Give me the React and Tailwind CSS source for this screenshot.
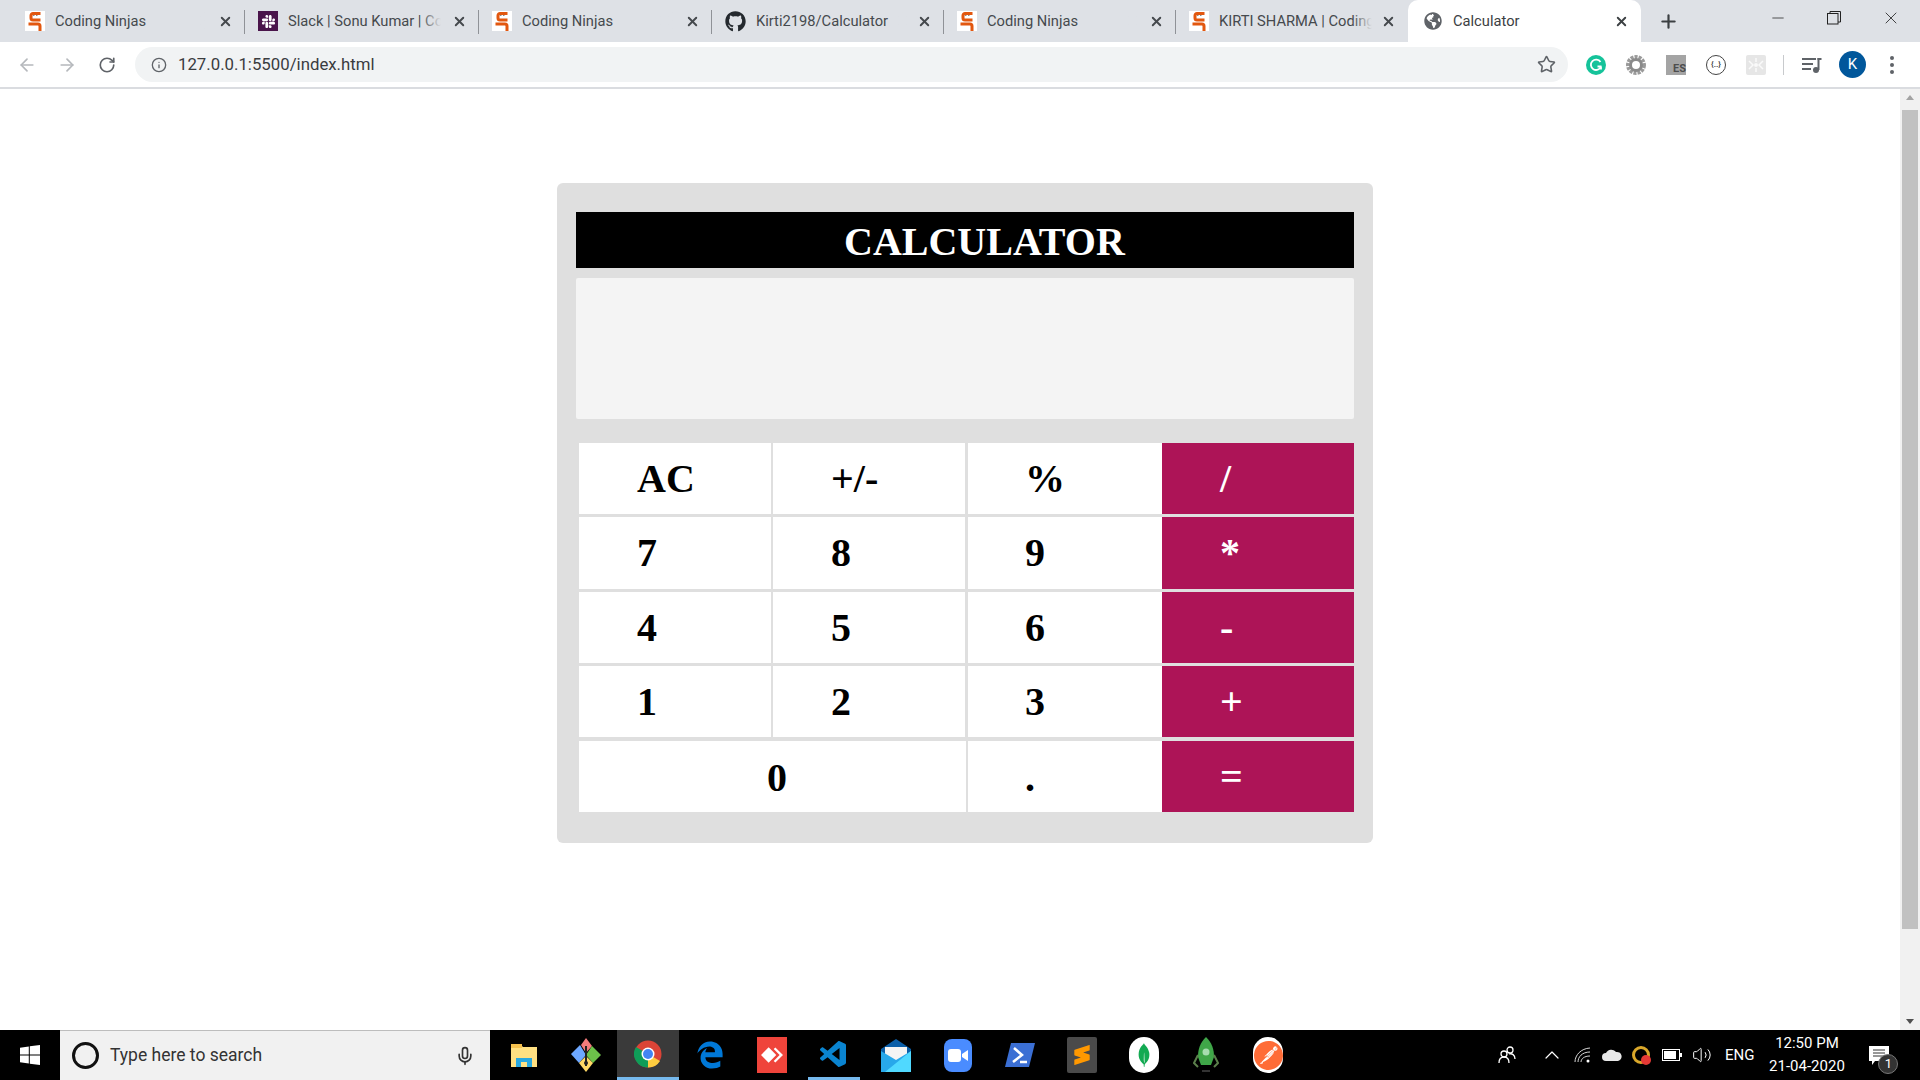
import React from "react";
import { FaGithub, FaSlack, FaGlobeAmericas, FaEdgeLegacy } from "react-icons/fa";
import { SiPostman, SiSublimetext, SiMongodb, SiAnydesk } from "react-icons/si";
import { VscVscode } from "react-icons/vsc";
import {
  ArrowLeft,
  ArrowRight,
  RotateCw,
  Info,
  Star,
  X,
  Plus,
  Minus,
  Mic,
  ChevronUp,
  Volume2,
} from "lucide-react";

const NinjaIcon = () => (
  <svg width="20" height="20" viewBox="0 0 20 20" className="shrink-0">
    <rect width="20" height="20" fill="#fff" />
    <path d="M15.500 2.500H8a2 2 0 0 0-2 2V7a2 2 0 0 0 2 2h7.500" fill="none" stroke="#e2570f" strokeWidth="3" />
    <path d="M8 4.500h1.500M11 4.500h1.500" stroke="#8a8a8a" strokeWidth="1" />
    <path d="M5 14.500V13h8a2 2 0 0 1 2 2v5" fill="none" stroke="#e2570f" strokeWidth="3" />
  </svg>
);

const tabs = [
  { title: "Coding Ninjas", icon: <NinjaIcon />, width: "w-[233px]" },
  {
    title: "Slack | Sonu Kumar | Coding Ninjas",
    width: "w-[234px]",
    icon: (
      <span className="w-5 h-5 shrink-0 bg-[#4a154b] flex items-center justify-center text-white">
        <FaSlack size={15} />
      </span>
    ),
  },
  { title: "Coding Ninjas", icon: <NinjaIcon />, width: "w-[233px]" },
  {
    title: "Kirti2198/Calculator",
    width: "w-[232px]",
    icon: <FaGithub size={21} className="shrink-0 text-[#24292e]" />,
  },
  { title: "Coding Ninjas", icon: <NinjaIcon />, width: "w-[232px]" },
  { title: "KIRTI SHARMA | Coding Ninjas", icon: <NinjaIcon />, width: "w-[232px]" },
];

const Tab = ({ title, icon, width, last }) => (
  <div className={`${width} h-[42px] flex items-center pl-[13px] pr-[12px] relative`}>
    {icon}
    <div className="ml-[10px] w-[153px] overflow-hidden whitespace-nowrap text-[14.700px] text-[#45494d] relative">
      {title}
      <div className="absolute right-0 top-0 bottom-0 w-5 bg-gradient-to-r from-transparent to-[#dee1e6]" />
    </div>
    <X size={15} strokeWidth={3} className="ml-auto text-[#45494d]" />
    {!last && <div className="absolute right-0 top-[10px] w-[1px] h-[24px] bg-[#8f9297]" />}
  </div>
);

const TabBar = () => (
  <div className="h-[42px] bg-[#dee1e6] flex pl-[12px] shrink-0">
    {tabs.map((t, i) => (
      <Tab key={i} title={t.title} icon={t.icon} width={t.width} last={i === tabs.length - 1} />
    ))}
    <div className="w-[233px] h-[42px] bg-white rounded-t-[10px] flex items-center pl-[16px] pr-[12px]">
      <FaGlobeAmericas size={18} className="text-[#5f6368]" />
      <span className="ml-[11px] text-[14.700px] text-[#3c4043]">Calculator</span>
      <X size={15} strokeWidth={3} className="ml-auto text-[#3c4043]" />
    </div>
    <div className="ml-[17px] flex items-center">
      <Plus size={21} strokeWidth={2.5} className="text-[#3c4043]" />
    </div>
    <div className="ml-auto flex items-start text-[#222]">
      <div className="w-[55px] h-[36px] flex items-center justify-center">
        <Minus size={18} strokeWidth={1} />
      </div>
      <div className="w-[57px] h-[36px] flex items-center justify-center">
        <svg width="14" height="14" viewBox="0 0 14 14" fill="none" stroke="currentColor">
          <rect x="0.500" y="2.500" width="10.500" height="10.500" />
          <path d="M3 2.500V0.500h10.500V11H11" />
        </svg>
      </div>
      <div className="w-[58px] h-[36px] flex items-center justify-center">
        <X size={20} strokeWidth={1} />
      </div>
    </div>
  </div>
);

const Toolbar = () => (
  <div className="h-[47px] bg-white border-b-[2px] border-[#dadce0] flex items-start pt-[5px] shrink-0">
    <div className="flex items-center h-[35px] pl-[17px] gap-[20px]">
      <ArrowLeft size={20} className="text-[#b5b8bc]" />
      <ArrowRight size={20} className="text-[#b5b8bc]" />
      <RotateCw size={18} strokeWidth={2.2} className="ml-[1px] text-[#5f6368]" />
    </div>
    <div className="ml-[19px] w-[1433px] h-[35px] bg-[#f1f3f4] rounded-full flex items-center pl-[16px] pr-[12px]">
      <Info size={16} className="text-[#5f6368]" />
      <span className="ml-[11px] text-[16.800px] text-[#3a3c3f]">127.0.0.1:5500/index.html</span>
      <Star size={19} className="ml-auto text-[#5f6368]" />
    </div>
    <div className="flex items-center h-[35px] ml-[18px]">
      <svg width="20" height="20" viewBox="0 0 20 20">
        <circle cx="10" cy="10" r="10" fill="#15c39a" />
        <path d="M14.500 7A5.200 5.200 0 1 0 15 11.500M15.500 11.500h-4M15 11.500v3" fill="none" stroke="#fff" strokeWidth="1.800" />
      </svg>
      <svg width="20" height="20" viewBox="0 0 20 20" className="ml-[20px]">
        <circle cx="10" cy="10" r="8" fill="none" stroke="#9a9a9a" strokeWidth="4" strokeDasharray="3 1" />
        <circle cx="10" cy="10" r="5.500" fill="none" stroke="#8a8a8a" strokeWidth="3" />
      </svg>
      <span className="ml-[20px] w-5 h-5 bg-[#a4a4a4] flex items-end justify-end text-[11px] font-bold leading-none text-[#4d4d4d] pb-[1px]">
        ES
      </span>
      <span className="ml-[20px] w-5 h-5 rounded-full border-[1.500px] border-[#444] flex items-center justify-center text-[8px] font-bold leading-none text-[#444]">
        {"{..}"}
      </span>
      <svg width="20" height="20" viewBox="0 0 20 20" className="ml-[20px]">
        <rect width="20" height="20" rx="2" fill="#e6e6e6" />
        <path d="M3 6l4 4-4 4M17 6l-4 4 4 4M10 3v4M10 13v4" fill="none" stroke="#fafafa" strokeWidth="1.500" />
        <circle cx="10" cy="10" r="2" fill="#fafafa" />
      </svg>
      <div className="ml-[17px] w-[1px] h-[20px] bg-[#c8cacd]" />
      <svg width="20" height="18" viewBox="0 0 20 18" className="ml-[18px]" fill="#5f6368">
        <rect x="0" y="2" width="14" height="2" />
        <rect x="0" y="7" width="11" height="2" />
        <rect x="0" y="12" width="9" height="2" />
        <circle cx="14" cy="14" r="3" />
        <rect x="15.500" y="2" width="2" height="12" />
        <rect x="15.500" y="2" width="4" height="2" />
      </svg>
      <span className="ml-[17px] w-[27px] h-[27px] rounded-full bg-[#01579b] flex items-center justify-center text-white text-[15px]">
        K
      </span>
      <svg width="6" height="20" viewBox="0 0 6 20" fill="#5f6368" className="ml-[23px]">
        <circle cx="3" cy="3" r="2" />
        <circle cx="3" cy="10" r="2" />
        <circle cx="3" cy="17" r="2" />
      </svg>
    </div>
  </div>
);

const rows = [
  ["AC", "+/-", "%", "/"],
  ["7", "8", "9", "*"],
  ["4", "5", "6", "-"],
  ["1", "2", "3", "+"],
];

const Calculator = () => (
  <div className="ml-[557px] mt-[94px] w-[816px] h-[660px] bg-[#dfdfdf] rounded-[6px] pt-[29px] pl-[19px] pr-[19px] font-['Liberation_Serif',serif]">
    <div className="h-[56px] bg-black text-white font-bold text-[40px] leading-[60px] pl-[268px]">CALCULATOR</div>
    <div className="mt-[10px] h-[141px] bg-[#f4f4f4] rounded-[2px]" />
    <div className="mt-[24px] ml-[3px] grid grid-cols-[194px_195px_194px_192px] grid-rows-[71px_72px_71px_71px_72px] gap-y-[3px] text-[40px] font-bold">
      {rows.map((row, r) =>
        row.map((label, c) =>
          c === 3 ? (
            <div key={label} className="bg-[#ad1457] text-white pl-[58px] flex items-center">
              {label}
            </div>
          ) : (
            <div
              key={label}
              className={
                c === 0
                  ? "bg-white border-r-[2px] border-[#dfdfdf] pl-[58px] flex items-center"
                  : c === 1
                    ? "bg-white border-r-[3px] border-[#dfdfdf] pl-[58px] flex items-center"
                    : "bg-white pl-[57px] flex items-center"
              }
            >
              {label}
            </div>
          )
        )
      )}
      <div className="col-span-2 mt-[1px] bg-white border-r-[2px] border-[#dfdfdf] pl-[188px] pt-[2px] flex items-center">0</div>
      <div className="bg-white mt-[1px] pl-[57px] pt-[2px] flex items-center">.</div>
      <div className="bg-[#ad1457] mt-[1px] text-white pl-[58px] flex items-center">=</div>
    </div>
  </div>
);

const Scrollbar = () => (
  <div className="w-[20px] bg-[#f1f1f1] flex flex-col items-center shrink-0">
    <div className="h-[17px] flex items-center justify-center">
      <div className="w-0 h-0 border-x-[4px] border-x-transparent border-b-[5px] border-b-[#a3a3a3]" />
    </div>
    <div className="mt-[4px] w-[16px] h-[819px] bg-[#c1c1c1]" />
    <div className="mt-auto h-[17px] flex items-center justify-center">
      <div className="w-0 h-0 border-x-[4px] border-x-transparent border-t-[5px] border-t-[#505050]" />
    </div>
  </div>
);

const AppSlot = ({ children, active, underline }) => (
  <div
    className={
      active
        ? "w-[62px] h-[50px] flex items-center justify-center bg-[#3a3a3a] border-b-[3px] border-[#76b9ed]"
        : "w-[62px] h-[50px] flex items-center justify-center relative"
    }
  >
    {children}
    {underline && <div className="absolute bottom-0 left-[5px] w-[52px] h-[3px] bg-[#76b9ed]" />}
  </div>
);

const Taskbar = () => (
  <div className="h-[50px] bg-black flex items-center shrink-0">
    <div className="w-[60px] flex justify-center">
      <svg width="20" height="20" viewBox="0 0 20 20" fill="#fff">
        <path d="M0 2.800l8.800-1.300v8H0zM9.800 1.300L20 0v9.500H9.800zM0 10.500h8.800v8L0 17.200zM9.800 10.500H20V20L9.800 18.700z" />
      </svg>
    </div>
    <div className="w-[430px] h-[50px] bg-[#f1f1f1] border-t-[1px] border-[#bdbdbd] flex items-center pl-[12px] pr-[15px]">
      <div className="w-[27px] h-[27px] rounded-full border-[3px] border-[#111]" />
      <span className="ml-[11px] text-[17.500px] text-[#333]">Type here to search</span>
      <Mic size={20} className="ml-auto text-[#333]" />
    </div>
    <div className="ml-[3px] flex">
      <AppSlot>
        <svg width="28" height="28" viewBox="0 0 28 28">
          <path d="M1 4h10l2 2h14v20H1z" fill="#ffe082" />
          <rect x="1" y="8" width="26" height="18" fill="#ffe082" />
          <rect x="1" y="3" width="11" height="4" fill="#f5c14e" />
          <path d="M6 26v-9h16v9h-5v-5h-6v5z" fill="#29a8e0" />
        </svg>
      </AppSlot>
      <AppSlot>
        <svg width="32" height="36" viewBox="0 0 32 36">
          <path d="M1 17l9-9 6 10-7 8z" fill="#6ea8ff" />
          <path d="M16 1l6 8-6 7-5-8z" fill="#f47b7b" />
          <path d="M22 9l9 9-8 8-7-8z" fill="#6cc24a" />
          <path d="M9 26l7-7 7 7-7 9z" fill="#ffd966" />
          <path d="M16 9v20" stroke="#222" strokeWidth="2" />
          <circle cx="16" cy="26" r="2" fill="#222" />
        </svg>
      </AppSlot>
      <AppSlot active>
        <svg width="28" height="28" viewBox="0 0 28 28">
          <circle cx="14" cy="14" r="13.500" fill="#db4437" />
          <path d="M14 14L26 21A13.500 13.500 0 0 1 14 27.500z" fill="#ffcd40" />
          <path d="M14 14L14 27.500A13.500 13.500 0 0 1 2 7z" fill="#0f9d58" />
          <circle cx="14" cy="14" r="6.500" fill="#fff" />
          <circle cx="14" cy="14" r="5" fill="#4285f4" />
        </svg>
      </AppSlot>
      <AppSlot>
        <FaEdgeLegacy size={28} className="text-[#0078d7]" />
      </AppSlot>
      <AppSlot>
        <span className="w-[30px] h-[36px] bg-[#ef443b] flex items-center justify-center text-white">
          <SiAnydesk size={22} />
        </span>
      </AppSlot>
      <AppSlot underline>
        <VscVscode size={32} className="text-[#0a84d0]" />
      </AppSlot>
      <AppSlot>
        <svg width="30" height="34" viewBox="0 0 30 34">
          <path d="M0 11L15 1l15 10v23H0z" fill="#0a5ea8" />
          <path d="M4 9h22v8l-11 6-11-6z" fill="#f4f4f4" />
          <path d="M0 13l15 9 15-9v21H0z" fill="#28a8ea" />
          <path d="M30 13v21H4z" fill="#50d9ff" />
        </svg>
      </AppSlot>
      <AppSlot>
        <span className="w-[28px] h-[33px] rounded-[8px] bg-[#4a8cff] flex items-center justify-center">
          <svg width="20" height="13" viewBox="0 0 20 13" fill="#fff">
            <rect width="13" height="13" rx="3" />
            <path d="M14 5l6-4v11l-6-4z" />
          </svg>
        </span>
      </AppSlot>
      <AppSlot>
        <svg width="30" height="30" viewBox="0 0 30 30">
          <path d="M6 3h24l-6 24H0z" fill="#3b6fd4" />
          <path d="M9 8l8 7-9 7M15 22h7" fill="none" stroke="#fff" strokeWidth="2.500" />
        </svg>
      </AppSlot>
      <AppSlot>
        <span className="w-[30px] h-[36px] rounded-[2px] bg-[#4a4a4a] flex items-center justify-center text-[#ff9800]">
          <SiSublimetext size={20} />
        </span>
      </AppSlot>
      <AppSlot>
        <span className="w-[30px] h-[36px] rounded-full bg-white flex items-center justify-center text-[#13aa52]">
          <SiMongodb size={24} />
        </span>
      </AppSlot>
      <AppSlot>
        <svg width="26" height="36" viewBox="0 0 26 36">
          <path d="M13 0C19 6 21 12 21 20l-3 8H8l-3-8C5 12 7 6 13 0z" fill="#3fa648" />
          <path d="M5 18L1 26l4 4M21 18l4 8-4 4" fill="none" stroke="#5b7f4b" strokeWidth="2" />
          <circle cx="13" cy="15" r="3.500" fill="#a6dcae" />
          <rect x="9" y="33" width="8" height="2" fill="#333" />
        </svg>
      </AppSlot>
      <AppSlot>
        <span className="w-[30px] h-[36px] rounded-full bg-white flex items-center justify-center text-[#ff6c37]">
          <SiPostman size={29} />
        </span>
      </AppSlot>
    </div>
    <div className="flex items-center ml-[198px] text-white">
      <svg width="20" height="20" viewBox="0 0 20 20" fill="none" stroke="#fff" strokeWidth="1.300">
        <circle cx="13" cy="5" r="3" />
        <circle cx="7" cy="9" r="3" />
        <path d="M2 18c0-4 2-6 5-6s5 2 5 6M12 9c3-1 6 1 6 5" />
      </svg>
      <ChevronUp size={24} strokeWidth={1.2} className="ml-[23px]" />
      <svg width="17" height="16" viewBox="0 0 17 16" fill="none" stroke="#d8d8d8" strokeWidth="1" className="ml-[10px]">
        <path d="M1 15C1 8 7 1.500 16 1M4 15c0-5 4-10 12-10M7 15c0-3 3-6 9-6" />
        <circle cx="14" cy="14" r="1.500" fill="#fff" stroke="none" />
      </svg>
      <svg width="20" height="12" viewBox="0 0 20 12" fill="#e8e8e8" className="ml-[11px]">
        <path d="M4 12a4 4 0 0 1 0-8 6 6 0 0 1 10-1 4.500 4.500 0 0 1 2 9z" />
      </svg>
      <span className="ml-[10px] w-[18px] h-[18px] rounded-full border-[3px] border-[#d9a72a] relative">
        <span className="absolute -right-[4px] -bottom-[4px] w-[10px] h-[10px] rounded-full bg-[#e53935]" />
      </span>
      <svg width="20" height="12" viewBox="0 0 20 12" className="ml-[12px]">
        <rect x="0.500" y="0.500" width="17" height="11" fill="none" stroke="#fff" />
        <rect x="2" y="2" width="12" height="8" fill="#fff" />
        <rect x="18" y="4" width="2" height="4" fill="#fff" />
      </svg>
      <Volume2 size={20} strokeWidth={1.2} className="ml-[10px]" />
      <span className="ml-[13px] text-[15px]">ENG</span>
      <div className="ml-[10px] w-[85px] flex flex-col items-center text-[15px] leading-[23px]">
        <span>12:50 PM</span>
        <span>21-04-2020</span>
      </div>
      <div className="ml-[20px] relative">
        <svg width="20" height="19" viewBox="0 0 20 19">
          <path d="M0 0h20v15H6l-3 4v-4H0z" fill="#fff" />
          <path d="M4 4h12M4 7h12M4 10h12" stroke="#333" />
        </svg>
        <span className="absolute -right-[9px] -bottom-[9px] w-[20px] h-[20px] rounded-full bg-[#333] border-[1px] border-[#777] flex items-center justify-center text-[13px] leading-none">
          1
        </span>
      </div>
    </div>
  </div>
);

export default function App() {
  return (
    <div className="h-screen overflow-hidden flex flex-col bg-white font-['Roboto',sans-serif]">
      <TabBar />
      <Toolbar />
      <div className="flex flex-1 min-h-0">
        <div className="flex-1">
          <Calculator />
        </div>
        <Scrollbar />
      </div>
      <Taskbar />
    </div>
  );
}
